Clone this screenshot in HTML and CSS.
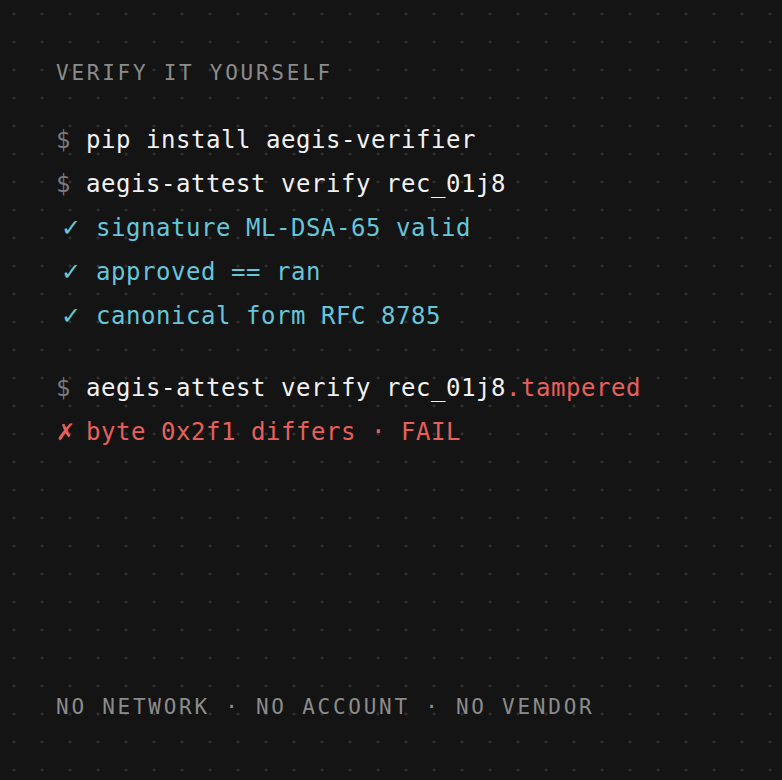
FILE: index.html
```html
<!DOCTYPE html>
<html lang="en">
<head>
<meta charset="utf-8">
<title>Verify it yourself</title>
<link rel="stylesheet" href="styles.css">
</head>
<body>
<main class="panel">
  <h1 class="label">VERIFY IT YOURSELF</h1>
  <div class="block">
    <div class="line"><span class="pfx prompt">$</span><span class="cmd">pip install aegis-verifier</span></div>
    <div class="line"><span class="pfx prompt">$</span><span class="cmd">aegis-attest verify rec_01j8</span></div>
    <div class="line ok"><span class="pfx check">✓</span><span>signature ML-DSA-65 valid</span></div>
    <div class="line ok"><span class="pfx check">✓</span><span>approved == ran</span></div>
    <div class="line ok"><span class="pfx check">✓</span><span>canonical form RFC 8785</span></div>
  </div>
  <div class="block">
    <div class="line"><span class="pfx prompt">$</span><span class="cmd">aegis-attest verify rec_01j8</span><span class="bad">.tampered</span></div>
    <div class="line bad"><span class="pfx cross">✗</span><span>byte 0x2f1 differs · FAIL</span></div>
  </div>
  <p class="label foot">NO NETWORK · NO ACCOUNT · NO VENDOR</p>
</main>
</body>
</html>
```
FILE: styles.css
```css
html, body {
  margin: 0;
  padding: 0;
  background: #141414;
}
.panel {
  box-sizing: border-box;
  height: 780px;
  padding: 59px 56px;
  display: flex;
  flex-direction: column;
  background-color: #141414;
  background-image: radial-gradient(circle, #323232 1.2px, transparent 1.8px);
  background-size: 28px 28px;
  background-position: 0 0;
  font-family: "DejaVu Sans Mono", "Liberation Mono", monospace;
}
.label {
  margin: 0;
  font-size: 21px;
  font-weight: normal;
  line-height: 28px;
  letter-spacing: 2.74px;
  color: #8c8c8c;
}
.block {
  margin-top: 31px;
  font-size: 24px;
  letter-spacing: 0.55px;
}
.block + .block {
  margin-top: 28px;
}
.line {
  display: flex;
  align-items: center;
  height: 44px;
  white-space: pre;
  color: #f2f2f2;
}
.pfx {
  display: inline-block;
  width: 30px;
}
.prompt {
  color: #7a7a7a;
}
.ok {
  color: #66c6da;
}
.check {
  width: 40px;
  padding-left: 5px;
  box-sizing: border-box;
  font-family: "DejaVu Sans", sans-serif;
  font-size: 24px;
  font-weight: 300;
}
.bad {
  color: #e7605b;
}
.cross {
  font-family: "DejaVu Sans", sans-serif;
  font-size: 23px;
  font-weight: bold;
}
.foot {
  margin-top: auto;
}
```
